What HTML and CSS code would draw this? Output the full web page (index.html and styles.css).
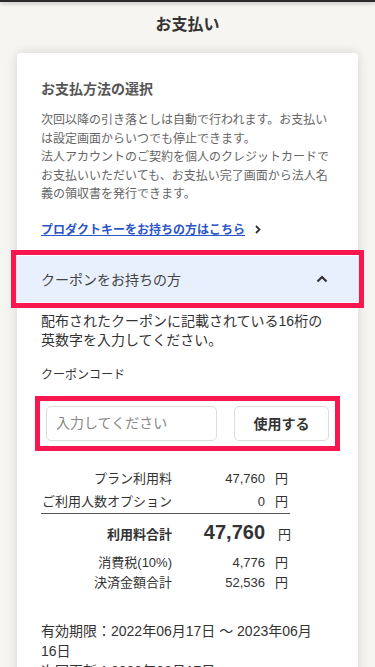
FILE: index.html
```html
<!DOCTYPE html>
<html lang="ja">
<head>
<meta charset="utf-8">
<meta name="viewport" content="width=device-width, initial-scale=1">
<title>お支払い</title>
<link rel="stylesheet" href="styles.css">
</head>
<body>
<div class="topbar"></div>
<h1 class="page-title">お支払い</h1>
<main class="card">
  <h2 class="section-title">お支払方法の選択</h2>
  <p class="note">次回以降の引き落としは自動で行われます。お支払いは設定画面からいつでも停止できます。<br>法人アカウントのご契約を個人のクレジットカードでお支払いいただいても、お支払い完了画面から法人名義の領収書を発行できます。</p>
  <a class="key-link" href="#"><span>プロダクトキーをお持ちの方はこちら</span><svg width="6" height="9" viewBox="0 0 6 9"><path d="M1 1l3.5 3.5L1 8" fill="none" stroke="#333" stroke-width="1.8"/></svg></a>
  <div class="coupon-toggle">
    <span>クーポンをお持ちの方</span>
    <svg width="12" height="8" viewBox="0 0 12 8"><path d="M1.5 6.5L6 2l4.5 4.5" fill="none" stroke="#333" stroke-width="2.2"/></svg>
  </div>
  <p class="coupon-desc">配布されたクーポンに記載されている16桁の英数字を入力してください。</p>
  <label class="code-label" for="code">クーポンコード</label>
  <div class="code-row">
    <input id="code" class="code-input" type="text" placeholder="入力してください">
    <button class="code-btn" type="button">使用する</button>
  </div>
  <dl class="summary">
    <div class="row"><dt>プラン利用料</dt><dd>47,760</dd><dd class="yen">円</dd></div>
    <div class="row row-sep"><dt>ご利用人数オプション</dt><dd>0</dd><dd class="yen">円</dd></div>
    <div class="row row-total"><dt>利用料合計</dt><dd class="amount">47,760</dd><dd class="yen">円</dd></div>
    <div class="row row-tax row-tax-first"><dt>消費税(10%)</dt><dd>4,776</dd><dd class="yen">円</dd></div>
    <div class="row row-tax"><dt>決済金額合計</dt><dd>52,536</dd><dd class="yen">円</dd></div>
  </dl>
  <p class="period">有効期限：2022年06月17日 〜 2023年06月<br>16日<br>次回更新：2023年06月17日</p>
</main>
</body>
</html>
```
FILE: styles.css
```css
* { box-sizing: border-box; }
body {
  margin: 0;
  background: #f6f5f1;
  font-family: "Liberation Sans", "Noto Sans CJK JP", sans-serif;
  color: #333;
}
.topbar {
  height: 2px;
  background: #2a2a2a;
  box-shadow: 0 1px 4px rgba(0, 0, 0, 0.35);
}
.page-title {
  margin: 0;
  padding: 11px 0 16px;
  font-size: 16px;
  line-height: 24px;
  font-weight: bold;
  text-align: center;
  color: #333;
}
.card {
  margin: 0 17px;
  background: #fff;
  border-radius: 4px;
  box-shadow: 0 0 12px rgba(0, 0, 0, 0.14);
  padding: 26px 24px 40px;
}
.section-title {
  margin: 0;
  font-size: 14px;
  line-height: 20px;
  font-weight: bold;
  color: #555;
}
.note {
  margin: 12px 0 0;
  font-size: 12px;
  line-height: 18.5px;
  color: #666;
}
.key-link {
  display: flex;
  align-items: center;
  gap: 10px;
  margin-top: 16px;
  font-size: 12px;
  line-height: 20px;
  font-weight: bold;
  color: #2b56c6;
  text-decoration: none;
}
.key-link span { text-decoration: underline; }
.coupon-toggle {
  margin: 16px -24px 0;
  padding: 0 30px 0 24px;
  height: 46px;
  display: flex;
  align-items: center;
  justify-content: space-between;
  background: #e8f0fd;
  outline: 5px solid #f8174f;
  outline-offset: 1px;
  font-size: 14px;
  color: #444;
}
.coupon-desc {
  margin: 10px 0 0;
  font-size: 14px;
  line-height: 19px;
  color: #333;
}
.code-label {
  display: block;
  margin-top: 16px;
  font-size: 12px;
  line-height: 18px;
  color: #333;
}
.code-row {
  display: flex;
  gap: 17px;
  margin: 12px -6px 0;
  padding: 5px 6px;
  border: 5px solid #f8174f;
}
.code-input {
  width: 171px;
  height: 35px;
  border: 1px solid #ddd;
  border-radius: 5px;
  padding: 0 9px;
  font-family: inherit;
  font-size: 14px;
  color: #333;
  background: #fff;
}
.code-input::placeholder { color: #888; }
.code-btn {
  flex: 1;
  height: 35px;
  border: 1px solid #ddd;
  border-radius: 5px;
  background: #fff;
  font-family: inherit;
  font-size: 14px;
  font-weight: bold;
  color: #333;
}
.summary {
  margin: 16px 0 0;
  width: 249px;
}
.row {
  display: grid;
  grid-template-columns: 131px 93px 1fr;
  font-size: 13px;
  line-height: 23px;
  color: #333;
}
.row dt, .row dd { margin: 0; }
.row dt { text-align: right; }
.row dd { text-align: right; }
.row .yen { text-align: left; padding-left: 10px; }
.row-sep { border-bottom: 1px solid #555; }
.row-total {
  padding-top: 4px;
  line-height: 28px;
  align-items: baseline;
}
.row-total dt { font-weight: bold; }
.row-total .amount { font-size: 20px; font-weight: bold; }
.row-total .yen { padding-left: 13px; }
.row-tax { line-height: 20px; }
.row-tax-first { margin-top: 4px; }
.period {
  margin: 28px 0 0;
  font-size: 14px;
  line-height: 20px;
  color: #333;
}
```
